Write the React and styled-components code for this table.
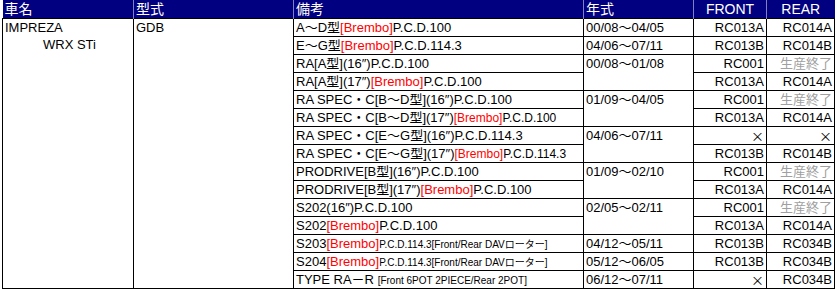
import React from 'react';
import styled, { createGlobalStyle } from 'styled-components';

const GlobalStyle = createGlobalStyle`
    body {
        margin: 0;
        background: #fff;
        font-family: "Liberation Sans", "Noto Sans CJK JP", sans-serif;
    }
`

const Sheet = styled.table`
    margin-left: 2px;
    border-collapse: collapse;
    table-layout: fixed;
    width: 832px;
    font-size: 13px;
    color: #000;
`

const Head = styled.th`
    height: 18px;
    padding: 0 2px;
    background: #000080;
    color: #fff;
    font-weight: normal;
    font-size: 14px;
    line-height: 18px;
    text-align: ${p => p.$center ? 'center' : 'left'};
    border-left: 1px solid #8080c0;
    overflow: hidden;
    &:first-child {
        border-left: none;
    }
`

const Cell = styled.td`
    height: 17px;
    padding: 0;
    border: 1px solid #000;
    vertical-align: top;
    text-align: ${p => p.$right ? 'right' : 'left'};
`

const Line = styled.div`
    height: 17px;
    line-height: 17px;
    padding: 0 2px;
    white-space: nowrap;
    overflow: hidden;
    padding-left: ${p => p.$indent || 2}px;
`

const Red = styled.span`
    color: #ff0000;
`

const Small = styled.span`
    font-size: ${p => p.$size}px;
`

const Ended = styled.span`
    color: #a0a0a0;
`

const Cross = styled.span`
    display: inline-block;
    height: 17px;
    line-height: 17px;
    vertical-align: top;
    font-family: "Noto Sans CJK JP", sans-serif;
    font-size: 13px;
`

const rows = [
    { note: <>A～D型<Red>[Brembo]</Red>P.C.D.100</>, year: '00/08～04/05', span: 1, front: 'RC013A', rear: 'RC014A' },
    { note: <>E～G型<Red>[Brembo]</Red>P.C.D.114.3</>, year: '04/06～07/11', span: 1, front: 'RC013B', rear: 'RC014B' },
    { note: <>RA[A型](16″)P.C.D.100</>, year: '00/08～01/08', span: 2, front: 'RC001', rear: null },
    { note: <>RA[A型](17″)<Red>[Brembo]</Red>P.C.D.100</>, front: 'RC013A', rear: 'RC014A' },
    { note: <>RA SPEC・C[B～D型](16″)P.C.D.100</>, year: '01/09～04/05', span: 2, front: 'RC001', rear: null },
    { note: <>RA SPEC・C[B～D型](17″)<Small $size={12}><Red>[Brembo]</Red>P.C.D.100</Small></>, front: 'RC013A', rear: 'RC014A' },
    { note: <>RA SPEC・C[E～G型](16″)P.C.D.114.3</>, year: '04/06～07/11', span: 2, front: 'x', rear: 'x' },
    { note: <>RA SPEC・C[E～G型](17″)<Small $size={12}><Red>[Brembo]</Red>P.C.D.114.3</Small></>, front: 'RC013B', rear: 'RC014B' },
    { note: <>PRODRIVE[B型](16″)P.C.D.100</>, year: '01/09～02/10', span: 2, front: 'RC001', rear: null },
    { note: <>PRODRIVE[B型](17″)<Red>[Brembo]</Red>P.C.D.100</>, front: 'RC013A', rear: 'RC014A' },
    { note: <>S202(16″)P.C.D.100</>, year: '02/05～02/11', span: 2, front: 'RC001', rear: null },
    { note: <>S202<Red>[Brembo]</Red>P.C.D.100</>, front: 'RC013A', rear: 'RC014A' },
    { note: <>S203<Red>[Brembo]</Red><Small $size={10}>P.C.D.114.3[Front/Rear DAVローター]</Small></>, year: '04/12～05/11', span: 1, front: 'RC013B', rear: 'RC034B' },
    { note: <>S204<Red>[Brembo]</Red><Small $size={10}>P.C.D.114.3[Front/Rear DAVローター]</Small></>, year: '05/12～06/05', span: 1, front: 'RC013B', rear: 'RC034B' },
    { note: <>TYPE RA－R <Small $size={10}>[Front 6POT 2PIECE/Rear 2POT]</Small></>, year: '06/12～07/11', span: 1, front: 'x', rear: 'RC034B' },
]

const part = (v) => {
    if (v === null) return <Ended>生産終了</Ended>
    if (v === 'x') return <Cross>×</Cross>
    return v
}

const App = () => {
    return (<>
        <GlobalStyle />
        <Sheet>
            <colgroup>
                <col style={{ width: 131 }} />
                <col style={{ width: 160 }} />
                <col style={{ width: 290 }} />
                <col style={{ width: 110 }} />
                <col style={{ width: 73 }} />
                <col style={{ width: 68 }} />
            </colgroup>
            <thead>
                <tr>
                    <Head>車名</Head>
                    <Head>型式</Head>
                    <Head>備考</Head>
                    <Head>年式</Head>
                    <Head $center>FRONT</Head>
                    <Head $center>REAR</Head>
                </tr>
            </thead>
            <tbody>
                {rows.map((r, i) => (
                    <tr key={i}>
                        {i === 0 && <Cell rowSpan={rows.length}>
                            <Line>IMPREZA</Line>
                            <Line $indent={40}>WRX STi</Line>
                        </Cell>}
                        {i === 0 && <Cell rowSpan={rows.length}><Line>GDB</Line></Cell>}
                        <Cell><Line>{r.note}</Line></Cell>
                        {r.year && <Cell rowSpan={r.span}><Line>{r.year}</Line></Cell>}
                        <Cell $right><Line>{part(r.front)}</Line></Cell>
                        <Cell $right><Line>{part(r.rear)}</Line></Cell>
                    </tr>
                ))}
            </tbody>
        </Sheet>
    </>);
}

export default App;
